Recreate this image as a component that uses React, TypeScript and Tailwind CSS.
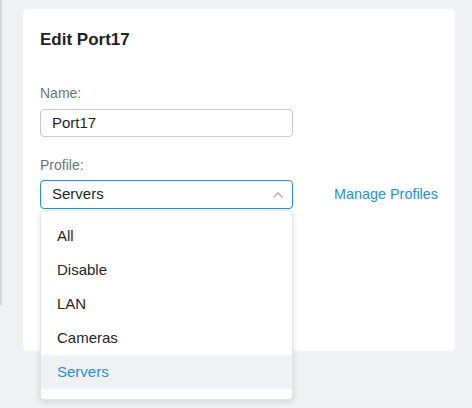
import React from "react";

const profiles = ["All", "Disable", "LAN", "Cameras", "Servers"];

export default function App() {
  const selected = "Servers";

  return (
    <div
      className="flex w-[472px] h-[408px] bg-[#f0f1f3] overflow-hidden"
      style={{ fontFamily: '"Liberation Sans", Arial, sans-serif' }}
    >
      {/* left edge strip */}
      <div className="w-[2px] h-[305px] bg-[#d7d8da] shrink-0" />

      {/* card */}
      <div className="ml-[21px] mt-[9px] w-[432px] h-[342px] rounded-[4px] bg-white px-[17px] pt-[21px]">
        <h2 className="text-[17px] leading-[20px] font-bold text-[#222]">Edit Port17</h2>

        <div className="mt-[33px]">
          <label className="block text-[14px] leading-[20px] text-[#6b737c]">Name:</label>
          <div className="mt-[6px] w-[253px] h-[28px] rounded-[4px] border border-[#c6c8cb] flex items-center px-[11px] text-[15px] text-[#1f1f1f]">
            Port17
          </div>
        </div>

        <div className="mt-[18px]">
          <label className="block text-[14px] leading-[20px] text-[#6b737c]">Profile:</label>
          <div className="mt-[5px] flex items-center">
            <div className="relative w-[253px]">
              <div className="h-[29px] rounded-[4px] border border-[#1b8fe6] flex items-center justify-between pl-[11px] pr-[8px] text-[15px] text-[#1f1f1f]">
                <span>{selected}</span>
                <svg width="12" height="8" viewBox="0 0 12 8" fill="none">
                  <path d="M1.5 6.5 L6 2 L10.5 6.5" stroke="#b4b6b9" strokeWidth="1.6" />
                </svg>
              </div>

              {/* dropdown menu */}
              <div className="absolute left-0 top-[30px] w-[253px] rounded-[4px] bg-white border border-[#e2e3e5] shadow-[0_2px_6px_rgba(0,0,0,0.12)] pt-[8px] pb-[10px] z-10">
                {profiles.map((p) => (
                  <div
                    key={p}
                    className={
                      p === selected
                        ? "h-[34px] flex items-center px-[16px] text-[15px] bg-[#f0f1f3] text-[#1b8fe6]"
                        : "h-[34px] flex items-center px-[16px] text-[15px] text-[#1f1f1f]"
                    }
                  >
                    {p}
                  </div>
                ))}
              </div>
            </div>
            <a className="ml-[41px] text-[14.4px] text-[#1b8fe6] cursor-pointer">Manage Profiles</a>
          </div>
        </div>
      </div>
    </div>
  );
}
